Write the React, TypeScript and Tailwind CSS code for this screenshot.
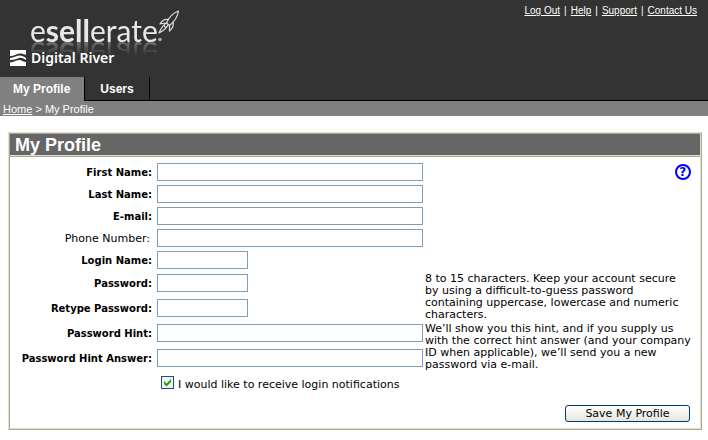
const links = ["Log Out", "Help", "Support", "Contact Us"];

type FieldProps = {
  id: string;
  label: string;
  type?: string;
  short?: boolean;
  tall?: boolean;
  optional?: boolean;
};

function Field({ id, label, type = "text", short, tall, optional }: FieldProps) {
  return (
    <>
      <label
        htmlFor={id}
        className={`col-start-1 flex items-center justify-end whitespace-nowrap ${tall ? "h-[25px]" : "h-[22px] pt-px"} ${optional ? "pr-[7px]" : "pr-[5px] text-[10px] font-bold"}`}
      >
        {label}
      </label>
      <div className={`col-start-2 flex ${tall ? "items-start pt-[3px]" : "items-center"}`}>
        <input
          id={id}
          name={id}
          type={type}
          className={`h-[18px] border border-[#7f9db9] bg-white px-1 outline-none ${short ? "w-[91px]" : "w-full"}`}
        />
      </div>
    </>
  );
}

function Rocket() {
  return (
    <svg width="24" height="32" viewBox="0 0 24 32" className="mt-[-4px] shrink-0" aria-hidden="true">
      <g fill="none" stroke="#e0e0e0" strokeWidth="1.200" strokeLinejoin="round" strokeLinecap="round">
        <path d="M20.500 1C15 3 11 7 8.500 13L11.500 15.500C16 12 19.500 7 20.500 1Z" />
        <path d="M10 9.500C7 9 4 10.500 2 14L7 13M15 12C16 15 15 18 11.500 21L11.500 16M8.500 13C5 15 3 18 1 23C5 21 8 19 10 15M6 15L7.500 18" />
      </g>
      <circle cx="2" cy="29.500" r="1.800" fill="#aaa" />
    </svg>
  );
}

function Logo() {
  return (
    <div className="pt-[14px] pl-2.5">
      <div className="flex h-8 items-start pl-5">
        <span className="font-[Lato,sans-serif] text-[30px] leading-8 text-[#e8e8e8] [-webkit-box-reflect:below_-8px_linear-gradient(transparent_45%,rgba(255,255,255,0.45))]">
          e<b>sell</b>erate
        </span>
        <Rocket />
      </div>
      <div className="mt-1 flex items-center gap-[5px] font-['Noto_Sans',sans-serif] text-sm leading-4 font-semibold">
        <svg width="16" height="16" viewBox="0 0 16 16" aria-hidden="true">
          <path d="M0 0H16V5C12 3 9 3 6 4.500C4 5.500 2 6 0 6ZM0 8C4 8 6 5.500 9 5.500C12 5.500 14 6.500 16 8V10C13 8 11 7.500 9 8C6 9 4 10 0 10ZM0 12.500C4 12.500 6 10 9 10C12 10 13 12 16 12V16H0Z" fill="#fff" />
        </svg>
        <span>Digital River</span>
      </div>
    </div>
  );
}

export default function App() {
  return (
    <div className="bg-white font-['DejaVu_Sans',Verdana,sans-serif] text-[11px] leading-3 text-black">
      <header className="bg-[#333] font-['Liberation_Sans',Arial,sans-serif] text-white">
        <div className="flex h-[77px] items-start justify-between">
          <Logo />
          <nav aria-label="Account" className="flex gap-1 pt-[5px] pr-[11px] text-[10px]">
            {links.map((text, i) => (
              <span key={text} className="flex gap-1">
                {i > 0 && <span>|</span>}
                <a href="#" className="underline">{text}</a>
              </span>
            ))}
          </nav>
        </div>
        <nav aria-label="Sections" className="flex h-6 text-xs font-bold">
          <a href="#" className="flex w-[84px] items-center bg-[#808080] pl-[13px]">My Profile</a>
          <div className="flex flex-1 border-b border-l border-black">
            <a href="#" className="flex w-[65px] items-center justify-center border-r border-black">Users</a>
          </div>
        </nav>
        <div className="h-[15px] bg-[#808080] pl-[3px] leading-4">
          <a href="#" className="underline">Home</a> &gt; My Profile
        </div>
      </header>

      <main className="pt-4 pr-1.5 pl-2">
        <form
          className="border border-[#e2dec8] border-r-[#aca899] border-b-[#aca899]"
          onSubmit={(e) => e.preventDefault()}
        >
          <div className="border border-[#aca899] border-r-[#e2dec8] border-b-[#e2dec8]">
            <h1 className="h-[22px] border-b border-[#e2dec8] bg-[#666] pl-[5px] font-['Liberation_Sans',Arial,sans-serif] text-lg leading-[22px] font-bold text-white">
              My Profile
            </h1>
            <div className="border-t border-[#aca899] pt-1 pr-2.5 pb-1.5">
              <div className="grid grid-cols-[147px_266px_1fr]">
                <Field id="first" label="First Name:" />
                <a
                  href="#"
                  aria-label="Help"
                  className="col-start-3 row-start-1 flex size-4 items-center justify-center self-center justify-self-end rounded-full border-2 border-[#00f] text-xs leading-none font-bold text-[#00f]"
                >
                  ?
                </a>
                <Field id="last" label="Last Name:" />
                <Field id="email" label="E-mail:" />
                <Field id="phone" label="Phone Number:" optional />
                <Field id="login" label="Login Name:" short />
                <Field id="password" label="Password:" type="password" short tall />
                <p className="col-start-3 row-span-2 row-start-6 pt-0.5 pl-0.5">
                  8 to 15 characters. Keep your account secure<br />
                  by using a difficult-to-guess password<br />
                  containing uppercase, lowercase and numeric<br />
                  characters.
                </p>
                <Field id="retype" label="Retype Password:" type="password" short tall />
                <Field id="hint" label="Password Hint:" tall />
                <p className="col-start-3 row-span-2 row-start-8 pt-0.5 pl-0.5 whitespace-nowrap">
                  We’ll show you this hint, and if you supply us<br />
                  with the correct hint answer (and your company<br />
                  ID when applicable), we’ll send you a new<br />
                  password via e-mail.
                </p>
                <Field id="answer" label="Password Hint Answer:" tall />
                <label className="col-span-2 col-start-2 flex items-start gap-1 pt-[5px] pl-1">
                  <span className="grid size-[13px]">
                    <input
                      type="checkbox"
                      defaultChecked
                      className="peer col-start-1 row-start-1 size-[13px] appearance-none border border-[#1c5180] bg-[#f3f3ef]"
                    />
                    <svg viewBox="0 0 13 13" className="pointer-events-none col-start-1 row-start-1 hidden size-[13px] peer-checked:block">
                      <path d="M3 5L5.500 7.500L10 3V6L5.500 10.500L3 8Z" fill="#21a121" />
                    </svg>
                  </span>
                  <span className="pt-[3px]">I would like to receive login notifications</span>
                </label>
              </div>
              <div className="flex justify-end pt-3.5">
                <button
                  type="submit"
                  className="h-[17px] w-[125px] rounded-[3px] border border-[#003c74] bg-linear-to-b from-white to-[#e6e5dc] leading-[15px]"
                >
                  Save My Profile
                </button>
              </div>
            </div>
          </div>
        </form>
      </main>
    </div>
  );
}
